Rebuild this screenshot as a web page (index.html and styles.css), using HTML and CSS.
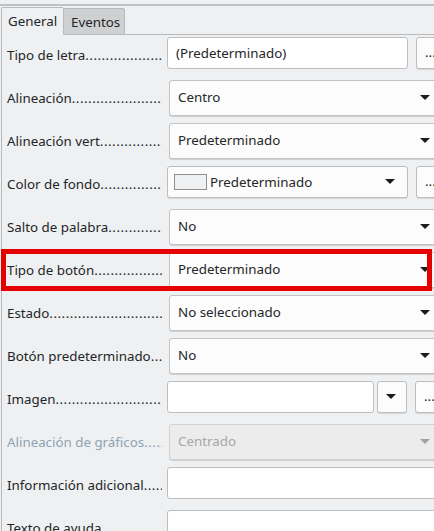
FILE: index.html
```html
<!DOCTYPE html>
<html lang="es">
<head>
<meta charset="utf-8">
<link rel="stylesheet" href="styles.css">
</head>
<body>
<div class="top"></div>
<div class="tabs">
  <div class="tab active">General</div>
  <div class="tab">Eventos</div>
  <div class="tabfill"></div>
</div>
<div class="panel">
  <div class="row">
    <div class="label">Tipo de letra<span class="lead">..............................</span></div>
    <div class="field">
      <div class="edit short">(Predeterminado)</div>
      <div class="btn dots">...</div>
    </div>
  </div>
  <div class="row">
    <div class="label">Alineación<span class="lead">..............................</span></div>
    <div class="field"><div class="combo">Centro<span class="arrow"></span></div></div>
  </div>
  <div class="row">
    <div class="label">Alineación vert<span class="lead">..............................</span></div>
    <div class="field"><div class="combo">Predeterminado<span class="arrow"></span></div></div>
  </div>
  <div class="row">
    <div class="label">Color de fondo<span class="lead">..............................</span></div>
    <div class="field">
      <div class="colorbtn"><span class="swatch"></span>Predeterminado<span class="arrow"></span></div>
      <div class="btn dots">...</div>
    </div>
  </div>
  <div class="row">
    <div class="label">Salto de palabra<span class="lead">..............................</span></div>
    <div class="field"><div class="combo">No<span class="arrow"></span></div></div>
  </div>
  <div class="row">
    <div class="label">Tipo de botón<span class="lead">..............................</span></div>
    <div class="field"><div class="combo">Predeterminado<span class="arrow"></span></div></div>
  </div>
  <div class="row">
    <div class="label">Estado<span class="lead">..............................</span></div>
    <div class="field"><div class="combo">No seleccionado<span class="arrow"></span></div></div>
  </div>
  <div class="row">
    <div class="label">Botón predeterminado<span class="lead">...</span></div>
    <div class="field"><div class="combo">No<span class="arrow"></span></div></div>
  </div>
  <div class="row">
    <div class="label">Imagen<span class="lead">........................................</span></div>
    <div class="field">
      <div class="edit img"></div>
      <div class="btn drop"><span class="arrow"></span></div>
      <div class="btn dots">...</div>
    </div>
  </div>
  <div class="row">
    <div class="label disabled">Alineación de gráficos<span class="lead">.....</span></div>
    <div class="field"><div class="combo off">Centrado<span class="arrow"></span></div></div>
  </div>
  <div class="row">
    <div class="label">Información adicional<span class="lead">.....</span></div>
    <div class="field"><div class="edit full"></div></div>
  </div>
  <div class="row">
    <div class="label">Texto de ayuda<span class="lead">..............................</span></div>
    <div class="field"><div class="edit full"></div></div>
  </div>
</div>
<div class="highlight"></div>
</body>
</html>
```
FILE: styles.css
```css
html, body {
  margin: 0;
  padding: 0;
}
body {
  width: 434px;
  height: 531px;
  overflow: hidden;
  background: #eff0f1;
  font-family: "Noto Sans", "Open Sans", sans-serif;
  font-size: 13.33px;
  color: #232629;
  position: relative;
}
.top {
  height: 4px;
  border-bottom: 2px solid #bfc0c1;
  margin-bottom: 1px;
}
.tabs {
  display: flex;
  height: 28px;
  padding-left: 1px;
}
.tab {
  box-sizing: border-box;
  width: 62px;
  padding-left: 6px;
  line-height: 26px;
  border: 1px solid #b9babb;
  background: #cfd0d1;
  margin-top: 1px;
  height: 27px;
}
.tab.active {
  background: #eff0f1;
  margin-top: 0;
  height: 28px;
  border-bottom: none;
  border-right: none;
  border-radius: 2px 0 0 0;
}
.tab + .tab {
  padding-left: 7px;
  border-radius: 0 2px 0 0;
}
.tabfill {
  flex: 1;
  border-bottom: 1px solid #b9babb;
}
.panel {
  margin-left: 1px;
  border-left: 1px solid #b9babb;
}
.row {
  display: flex;
  height: 43px;
}
.label {
  width: 160px;
  padding-left: 5px;
  box-sizing: border-box;
  line-height: 41px;
  white-space: nowrap;
  overflow: hidden;
  text-overflow: clip;
  flex: none;
}
.lead {
  letter-spacing: 0.5px;
}
.label.disabled {
  color: #8ea3b5;
}
.field {
  display: flex;
  flex: none;
  width: 290px;
  margin-left: 5px;
  padding-top: 2px;
  align-items: flex-start;
}
.edit {
  box-sizing: border-box;
  height: 32px;
  background: #ffffff;
  border: 1px solid #bdbebf;
  border-radius: 3px;
  padding-left: 8px;
  line-height: 30px;
  flex: none;
}
.edit.short { width: 241px; }
.edit.img { width: 207px; }
.edit.full { width: 290px; }
.btn {
  box-sizing: border-box;
  height: 32px;
  width: 30px;
  background: #fcfcfc;
  border: 1px solid #bdbebf;
  border-radius: 3px;
  flex: none;
  position: relative;
  box-shadow: 0 1px 0 #d6d7d8;
}
.btn.dots {
  margin-left: 8px;
  padding-left: 8px;
  line-height: 28px;
}
.btn.drop {
  margin-left: 3px;
  width: 30px;
}
.btn.drop .arrow {
  right: 10px;
}
.combo {
  box-sizing: border-box;
  margin-left: 2px;
  width: 280px;
  height: 36px;
  background: #fcfcfc;
  border: 1px solid #c2c3c4;
  border-radius: 3px;
  padding-left: 8px;
  line-height: 33px;
  position: relative;
  box-shadow: 0 1px 0 #cfd0d1;
  flex: none;
}
.combo.off {
  background: #ececec;
  color: #a6a7a8;
  border-color: #cfd0d1;
}
.combo .arrow {
  left: 250px;
}
.arrow {
  position: absolute;
  top: 50%;
  margin-top: -3px;
  width: 0;
  height: 0;
  border-left: 5px solid transparent;
  border-right: 5px solid transparent;
  border-top: 5px solid #1b1c1d;
}
.combo.off .arrow {
  border-top-color: #a0a1a2;
}
.colorbtn {
  box-sizing: border-box;
  width: 241px;
  height: 32px;
  background: #fcfcfc;
  border: 1px solid #bdbebf;
  border-radius: 3px;
  position: relative;
  display: flex;
  align-items: center;
  padding-left: 6px;
  box-shadow: 0 1px 0 #d6d7d8;
  flex: none;
}
.colorbtn .arrow {
  right: 12px;
}
.swatch {
  box-sizing: border-box;
  width: 33px;
  height: 16px;
  border: 1px solid #8e8f90;
  background: #eff0f1;
  margin-right: 3px;
}
.highlight {
  position: absolute;
  left: 1px;
  top: 249px;
  width: 431px;
  height: 42px;
  box-sizing: border-box;
  border: 5px solid #e50000;
}
```
